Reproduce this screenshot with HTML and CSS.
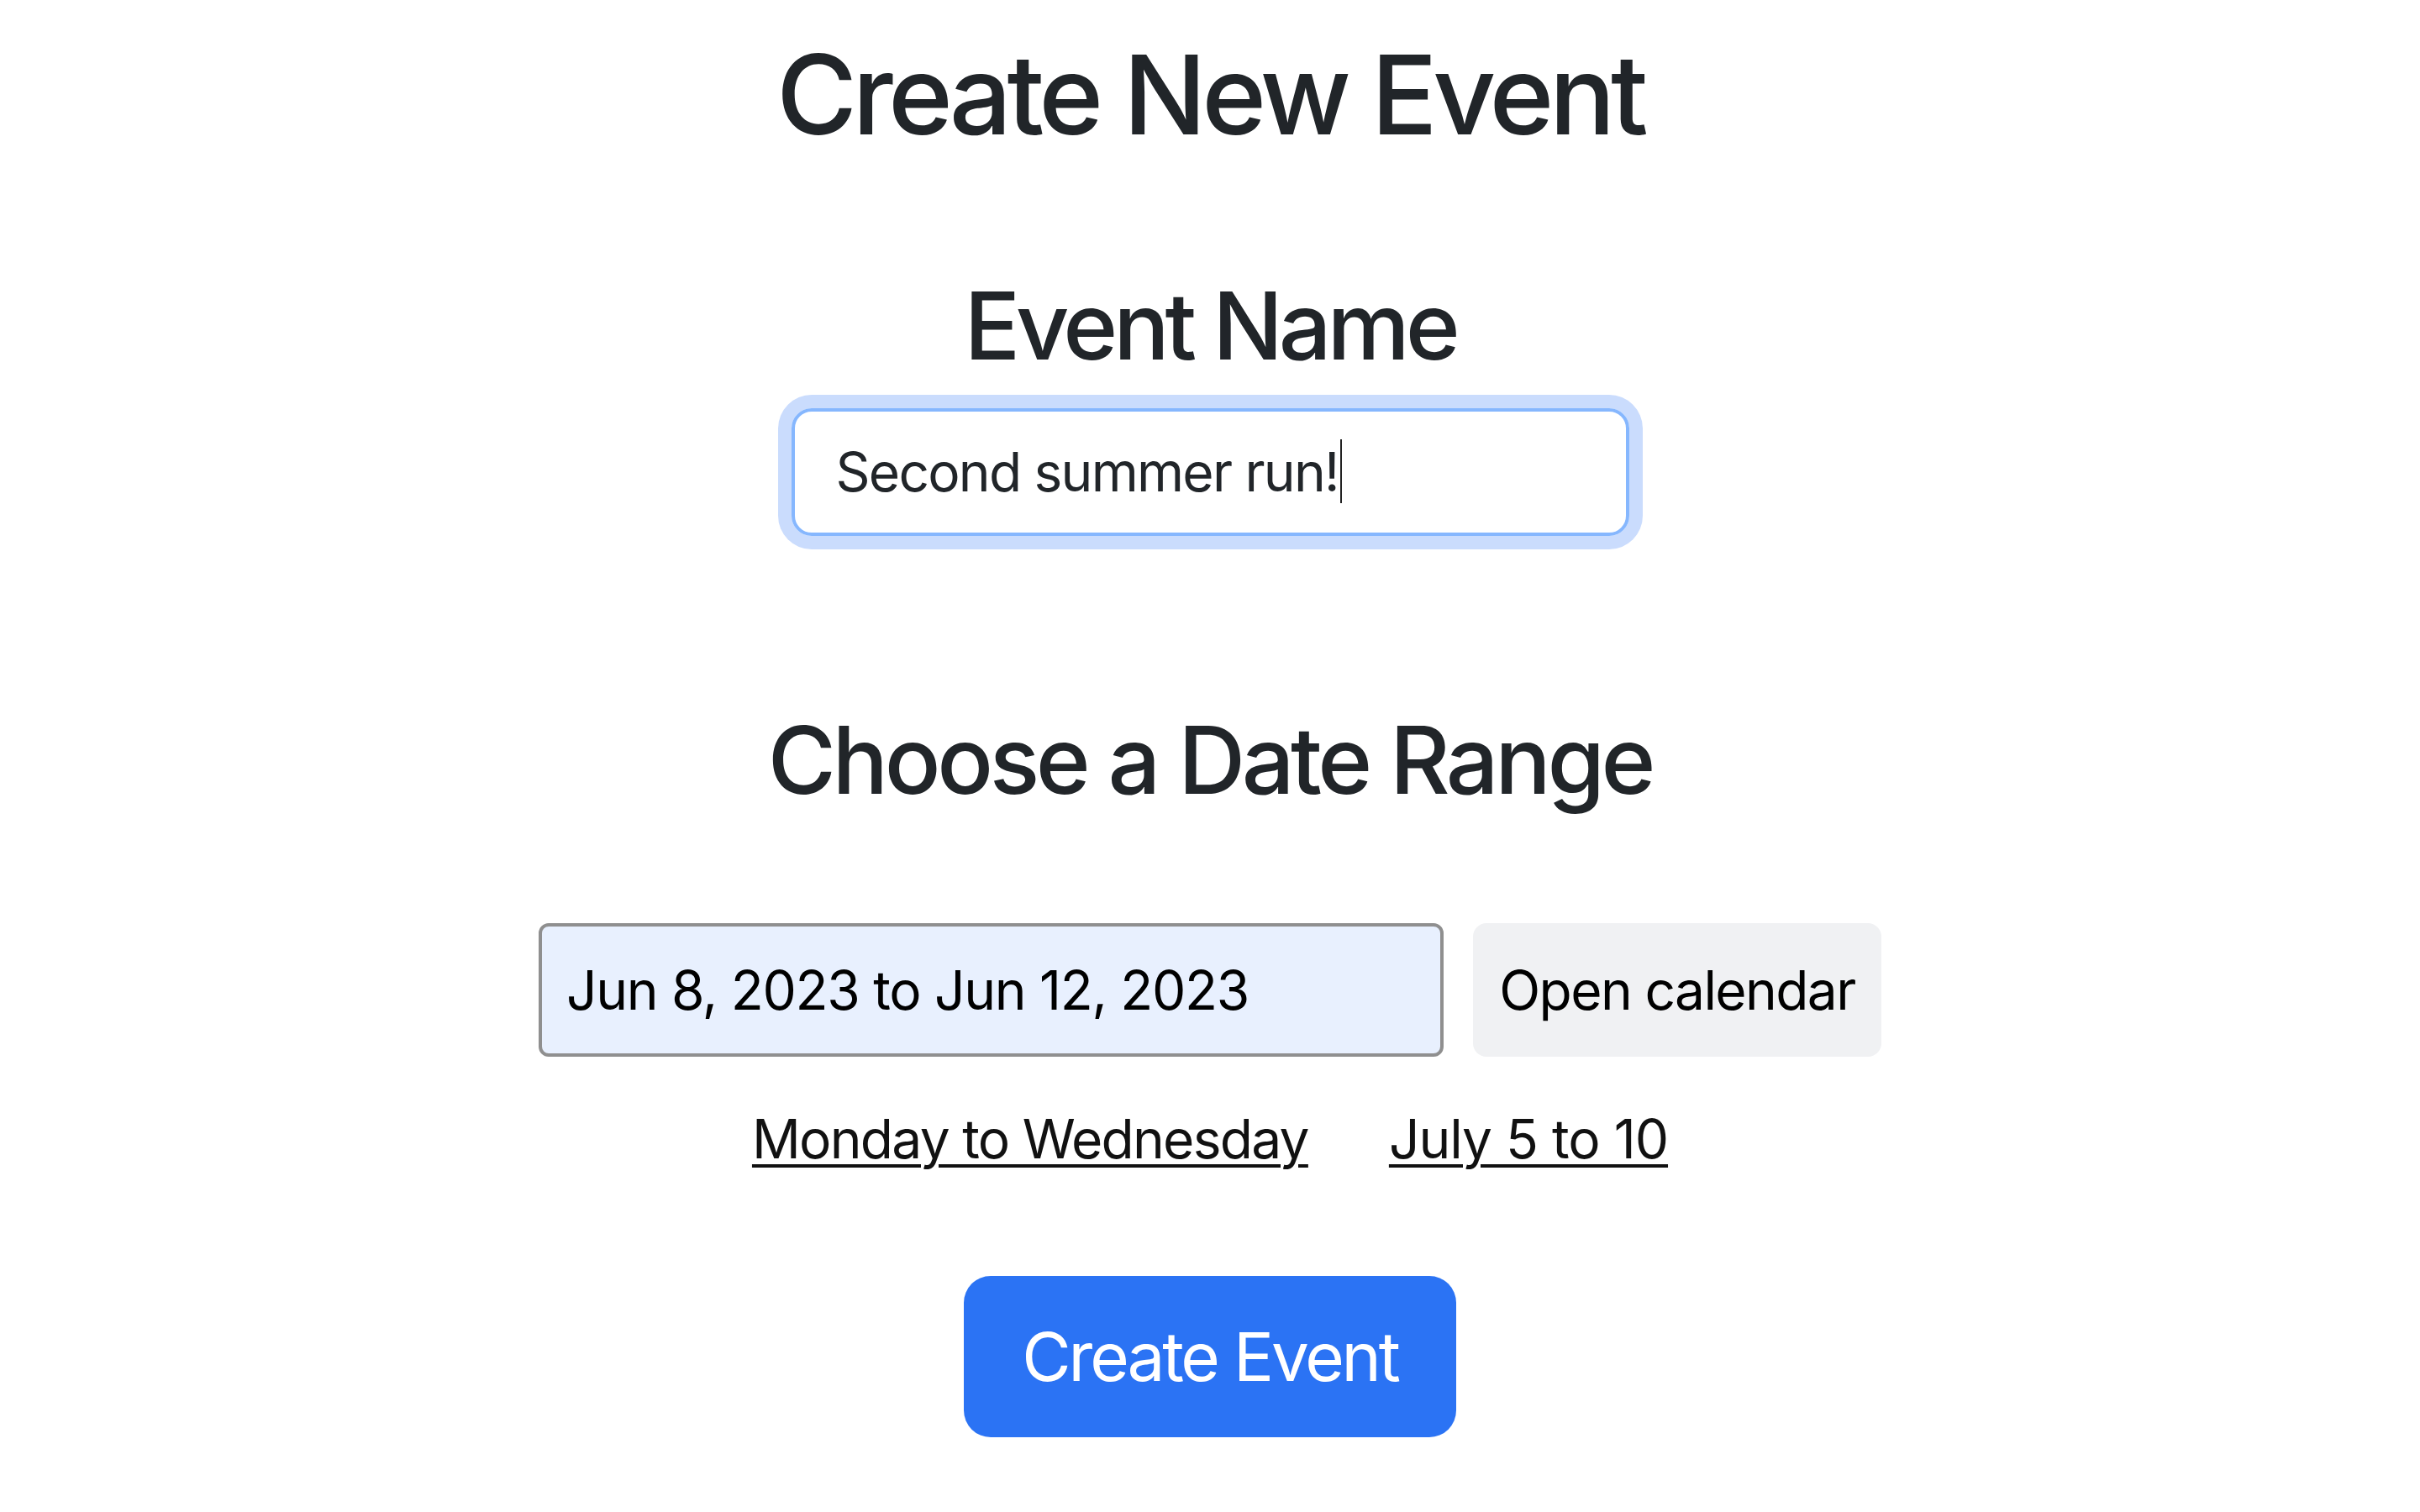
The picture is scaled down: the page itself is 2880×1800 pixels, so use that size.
FILE: index.html
```html
<!DOCTYPE html>
<html lang="en">
<head>
<meta charset="utf-8">
<title>Create New Event</title>
<link rel="stylesheet" href="styles.css">
</head>
<body>
<main class="page">
  <h1 class="title">Create New Event</h1>
  <section class="field">
    <h2 class="heading heading-name">Event Name</h2>
    <div class="name-box"><span class="name-text">Second summer run!</span><span class="caret"></span></div>
  </section>
  <section class="field">
    <h2 class="heading heading-date">Choose a Date Range</h2>
    <div class="date-row">
      <div class="date-input">Jun 8, 2023 to Jun 12, 2023</div>
      <button class="cal-btn" type="button">Open calendar</button>
    </div>
    <div class="presets">
      <a class="preset preset-week" href="#">Monday to Wednesday</a>
      <a class="preset" href="#">July 5 to 10</a>
    </div>
  </section>
  <button class="primary" type="button">Create Event</button>
</main>
</body>
</html>
```
FILE: styles.css
```css
html, body {
  margin: 0;
  background: #ffffff;
}
body {
  font-family: Inter, "Liberation Sans", Arial, sans-serif;
  color: #212529;
}
.page {
  display: flex;
  flex-direction: column;
  align-items: center;
  padding-top: 34px;
}
.title {
  margin: 0;
  font-size: 131px;
  line-height: 157px;
  font-weight: 500;
  letter-spacing: -5.6px;
}
.field {
  display: flex;
  flex-direction: column;
  align-items: center;
}
.heading {
  margin: 0;
  font-size: 110.7px;
  line-height: 133px;
  font-weight: 500;
}
.heading-name {
  margin-top: 131px;
  margin-bottom: 31px;
  letter-spacing: -5.2px;
}
.name-box {
  box-sizing: border-box;
  width: 997px;
  height: 152px;
  padding: 24px 49px;
  border: 4px solid #86b7fe;
  border-radius: 24px;
  box-shadow: 0 0 0 16px #cadcfd;
  font-size: 64px;
  line-height: 96px;
  color: #212529;
  white-space: nowrap;
  letter-spacing: -1.75px;
}
.caret {
  display: inline-block;
  width: 2px;
  height: 76px;
  margin-left: 2px;
  background: #222222;
  vertical-align: -14px;
}
.heading-date {
  margin-top: 201px;
  margin-bottom: 127px;
  letter-spacing: -4.4px;
}
.date-row {
  display: flex;
  gap: 35px;
}
.date-input {
  box-sizing: border-box;
  width: 1077px;
  height: 159px;
  padding: 0 29px;
  display: flex;
  align-items: center;
  border: 4px solid #8f8f8f;
  border-radius: 12px;
  background: #e8f0fe;
  color: #000000;
  font-size: 64px;
  line-height: 96px;
  letter-spacing: -1.3px;
}
.cal-btn {
  box-sizing: border-box;
  width: 486px;
  height: 159px;
  padding: 0;
  border: none;
  border-radius: 16px;
  background: #f0f1f3;
  color: #000000;
  font-family: inherit;
  font-size: 64px;
  line-height: 96px;
  letter-spacing: -1.6px;
}
.presets {
  display: flex;
  gap: 96px;
  margin-top: 50px;
  font-size: 64px;
  line-height: 96px;
  letter-spacing: -1px;
}
.preset {
  color: #111111;
  text-decoration: underline;
  text-decoration-thickness: 4px;
  text-underline-offset: 7px;
}
.preset-week {
  letter-spacing: -1.7px;
}
.primary {
  box-sizing: border-box;
  width: 586px;
  height: 192px;
  margin-top: 115px;
  padding: 0;
  border: none;
  border-radius: 32px;
  background: #2b73f4;
  color: #ffffff;
  font-family: inherit;
  font-size: 80px;
  line-height: 120px;
  letter-spacing: -3.2px;
}
```
